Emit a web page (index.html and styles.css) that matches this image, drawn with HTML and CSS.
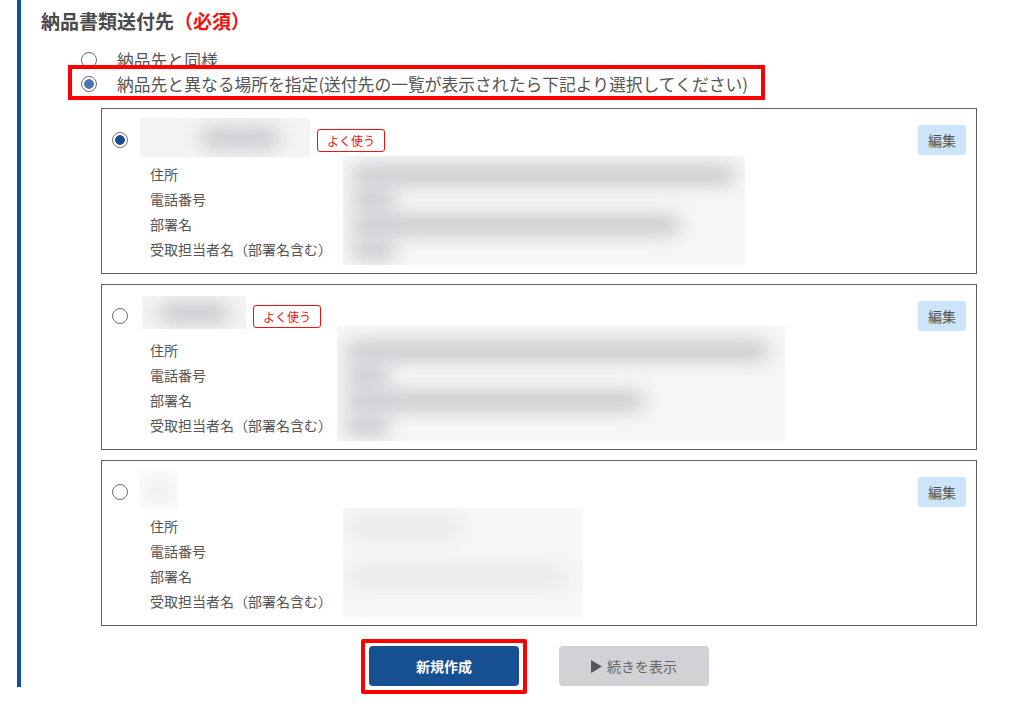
FILE: index.html
```html
<!DOCTYPE html>
<html lang="ja">
<head>
    <meta charset="UTF-8">
    <meta name="viewport" content="width=device-width, initial-scale=1.0">
    <title>納品書類送付先</title>
    <link rel="stylesheet" href="styles.css">
</head>
<body>
    <div class="section">
        <h2 class="title">納品書類送付先<span class="required">（必須）</span></h2>

        <div class="options">
            <label class="opt">
                <input type="radio" name="dest" class="radio">
                <span>納品先と同様</span>
            </label>
            <label class="opt marked">
                <input type="radio" name="dest" class="radio" checked>
                <span>納品先と異なる場所を指定(送付先の一覧が表示されたら下記より選択してください)</span>
            </label>
        </div>

        <div class="cards">
            <div class="card">
                <div class="card-head">
                    <input type="radio" name="addr" class="radio dark" checked>
                    <div class="name name-1"><i class="blur" style="width: 80px; margin-left: 60px"></i></div>
                    <span class="badge">よく使う</span>
                    <button class="edit">編集</button>
                </div>
                <div class="details">
                    <ul class="labels">
                        <li>住所</li>
                        <li>電話番号</li>
                        <li>部署名</li>
                        <li>受取担当者名（部署名含む）</li>
                    </ul>
                    <div class="values v-1">
                        <div class="row"><i class="blur" style="width: 385px"></i></div>
                        <div class="row"><i class="blur" style="width: 45px"></i></div>
                        <div class="row"><i class="blur" style="width: 330px"></i></div>
                        <div class="row"><i class="blur" style="width: 45px"></i></div>
                    </div>
                </div>
            </div>

            <div class="card">
                <div class="card-head">
                    <input type="radio" name="addr" class="radio dark">
                    <div class="name name-2"><i class="blur" style="width: 70px"></i></div>
                    <span class="badge">よく使う</span>
                    <button class="edit">編集</button>
                </div>
                <div class="details">
                    <ul class="labels">
                        <li>住所</li>
                        <li>電話番号</li>
                        <li>部署名</li>
                        <li>受取担当者名（部署名含む）</li>
                    </ul>
                    <div class="values v-2">
                        <div class="row"><i class="blur" style="width: 425px"></i></div>
                        <div class="row"><i class="blur" style="width: 45px"></i></div>
                        <div class="row"><i class="blur" style="width: 300px"></i></div>
                        <div class="row"><i class="blur" style="width: 45px"></i></div>
                    </div>
                </div>
            </div>

            <div class="card">
                <div class="card-head">
                    <input type="radio" name="addr" class="radio dark">
                    <div class="name name-3 faint"><i class="blur" style="width: 20px"></i></div>
                    <button class="edit">編集</button>
                </div>
                <div class="details">
                    <ul class="labels">
                        <li>住所</li>
                        <li>電話番号</li>
                        <li>部署名</li>
                        <li>受取担当者名（部署名含む）</li>
                    </ul>
                    <div class="values v-3 faint">
                        <div class="row"><i class="blur" style="width: 110px"></i></div>
                        <div class="row"></div>
                        <div class="row"><i class="blur" style="width: 215px"></i></div>
                        <div class="row"></div>
                    </div>
                </div>
            </div>
        </div>

        <div class="actions">
            <span class="frame"><button class="btn btn-primary">新規作成</button></span>
            <button class="btn btn-more">
                <svg class="tri" width="11" height="13" viewBox="0 0 11 13"><path d="M0 0 L11 6.5 L0 13 Z"/></svg>続きを表示
            </button>
        </div>
    </div>
</body>
</html>
```

FILE: styles.css
```css
body {
    margin: 0;
    padding-bottom: 18px;
    background: #fff;
    font-family: "Noto Sans CJK JP", "Noto Sans", sans-serif;
    color: #555;
}
.section {
    margin-left: 17px;
    border-left: 4px solid #17509a;
    padding: 8px 0 1px 20px;
}
.title {
    margin: 0;
    font-size: 19px;
    line-height: 26px;
    font-weight: bold;
    color: #4a4a4a;
}
.required {
    color: #f01010;
}
.options {
    margin: 14px 0 0 40px;
}
.opt {
    display: flex;
    align-items: center;
    height: 24px;
    font-size: 16.8px;
    color: #555;
}
.opt .radio {
    margin-right: 20px;
}
.opt.marked {
    box-sizing: border-box;
    width: 689px;
    height: 27px;
    margin: -3px 0 0 -9px;
    padding: 3px 0 0 9px;
    outline: 4px solid #f00;
}
.radio {
    appearance: none;
    -webkit-appearance: none;
    flex: none;
    width: 16px;
    height: 16px;
    margin: 0;
    border: 1px solid #6e6e6e;
    border-radius: 50%;
    background: #fff;
}
.radio:checked {
    background: radial-gradient(circle, #4677b6 0 4.5px, #fff 5.2px);
}
.radio.dark:checked {
    background: radial-gradient(circle, #174e92 0 4.5px, #fff 5.2px);
}
.cards {
    margin: 12px 0 0 60px;
    width: 876px;
}
.card {
    box-sizing: border-box;
    height: 166px;
    margin-bottom: 10px;
    border: 1px solid #5c5c68;
    padding: 9px 10px 0 10px;
}
.card:last-child {
    margin-bottom: 0;
}
.card-head {
    display: flex;
    align-items: center;
    height: 44px;
}
.name {
    display: flex;
    align-items: center;
    overflow: hidden;
    margin-left: 12px;
    background: #f4f4f5;
}
.name-1 {
    width: 170px;
    height: 39px;
    margin-top: -5px;
}
.name-2 {
    width: 104px;
    height: 33px;
    margin-top: -7px;
    margin-left: 14px;
    justify-content: center;
}
.name-3 {
    width: 39px;
    height: 38px;
    margin-left: 11px;
    margin-top: -4px;
    justify-content: center;
}
.blur {
    display: block;
    flex: none;
    height: 16px;
    background: #bdbdc2;
    border-radius: 8px;
    filter: blur(10px);
}
.faint {
    background: #fbfbfb;
}
.faint .blur {
    background: #e2e2e5;
}
.badge {
    margin-left: 7px;
    padding: 0 9px;
    border: 1px solid #f01010;
    border-radius: 3px;
    font-size: 12px;
    line-height: 21px;
    color: #f01010;
}
.edit {
    margin-left: auto;
    width: 48px;
    height: 30px;
    padding: 0;
    border: none;
    border-radius: 3px;
    background: #cce5fb;
    font-family: inherit;
    font-size: 14px;
    color: #555;
}
.details {
    display: flex;
    padding-left: 38px;
}
.labels {
    width: 193px;
    margin: 0;
    padding: 0;
    list-style: none;
    font-size: 14px;
    line-height: 25px;
    color: #555;
}
.values {
    width: 402px;
    height: 109px;
    margin-top: -6px;
    padding-top: 6px;
    box-sizing: border-box;
    overflow: hidden;
    background: #f7f7f8;
}
.v-2 {
    width: 448px;
    margin-left: -6px;
    margin-top: -12px;
    height: 115px;
    padding-top: 12px;
}
.v-3 {
    width: 240px;
}
.row {
    display: flex;
    align-items: center;
    height: 25px;
    padding-left: 8px;
}
.actions {
    display: flex;
    justify-content: center;
    align-items: flex-start;
    gap: 40px;
    width: 876px;
    margin: 20px 0 0 60px;
}
.frame {
    display: block;
    margin: -7px -8px -8px;
    padding: 3px 4px 4px;
    border: 4px solid #f00;
    border-radius: 2px;
}
.btn {
    display: flex;
    align-items: center;
    justify-content: center;
    width: 150px;
    height: 40px;
    border: none;
    border-radius: 4px;
    font-family: inherit;
    font-size: 14px;
}
.btn-primary {
    background: #174f93;
    color: #fff;
    font-weight: bold;
}
.btn-more {
    background: #d1d1d6;
    color: #666;
}
.tri {
    fill: #55555f;
    margin-right: 5px;
}
```
